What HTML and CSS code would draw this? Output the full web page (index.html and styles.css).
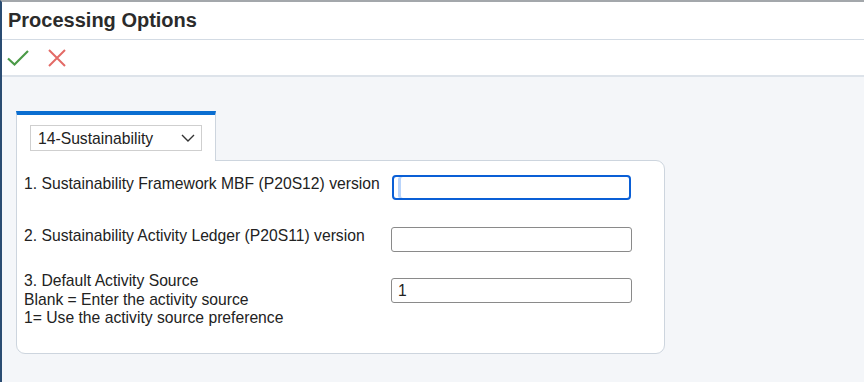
FILE: index.html
```html
<!DOCTYPE html>
<html lang="en">
<head>
    <meta charset="UTF-8">
    <title>Processing Options</title>
    <link rel="stylesheet" href="styles.css">
</head>
<body>
<div class="window">
    <div class="title-bar">
        <h1>Processing Options</h1>
    </div>
    <div class="toolbar">
        <button class="tool-btn" title="OK">
            <svg width="22" height="18" viewBox="0 0 22 18"><path d="M1 9.5 L7.5 15.5 L21 2" fill="none" stroke="#4b9a47" stroke-width="2.2"/></svg>
        </button>
        <button class="tool-btn" title="Cancel">
            <svg width="20" height="20" viewBox="0 0 20 20"><path d="M2 2 L18 18 M18 2 L2 18" fill="none" stroke="#e36a66" stroke-width="2"/></svg>
        </button>
    </div>
    <div class="content">
        <div class="tab">
            <select class="tab-select">
                <option>14-Sustainability</option>
            </select>
        </div>
        <div class="panel">
            <div class="row row-1">
                <label class="label" for="f1">1. Sustainability Framework MBF (P20S12) version</label>
                <input class="field field-focus" id="f1" type="text">
            </div>
            <div class="row row-2">
                <label class="label" for="f2">2. Sustainability Activity Ledger (P20S11) version</label>
                <input class="field" id="f2" type="text">
            </div>
            <div class="row row-3">
                <label class="label" for="f3">3. Default Activity Source<br>Blank = Enter the activity source<br>1= Use the activity source preference</label>
                <input class="field" id="f3" type="text" value="1">
            </div>
        </div>
    </div>
</div>
</body>
</html>
```

FILE: styles.css
```css
html, body {
    margin: 0;
    height: 100%;
}
body {
    font-family: "Liberation Sans", Arial, sans-serif;
    color: #222;
    background: #f4f6f9;
}
.window {
    height: 100%;
    border-top: 2px solid #a3a7ab;
    border-left: 2px solid #2a4c72;
    box-sizing: border-box;
}
.title-bar {
    background: #fff;
    height: 37px;
    padding-left: 6px;
    display: flex;
    align-items: center;
    border-bottom: 1px solid #d3dbe4;
}
.title-bar h1 {
    margin: 0;
    font-size: 20px;
    font-weight: bold;
    color: #2b2b2b;
}
.toolbar {
    background: #fff;
    height: 35px;
    display: flex;
    align-items: center;
    gap: 18px;
    padding-left: 5px;
    border-bottom: 2px solid #dde3ea;
}
.tool-btn {
    background: none;
    border: none;
    padding: 0;
    display: flex;
    cursor: pointer;
}
.content {
    padding: 34px 0 0 14px;
}
.tab {
    width: 200px;
    height: 50px;
    background: #fff;
    border-top: 4px solid #0a6ed1;
    border-left: 1px solid #cdd5de;
    border-right: 1px solid #cdd5de;
    padding: 10px 0 0 13px;
    box-sizing: border-box;
    margin-bottom: -1px;
    position: relative;
}
.tab-select {
    appearance: none;
    -webkit-appearance: none;
    width: 172px;
    height: 26px;
    font-family: inherit;
    font-size: 15.7px;
    color: #222;
    border: 1px solid #cfcfcf;
    border-radius: 0;
    padding: 0 0 0 7px;
    background: #fff url("data:image/svg+xml;utf8,<svg xmlns='http://www.w3.org/2000/svg' width='14' height='8' viewBox='0 0 14 8'><path d='M1 1 L7 7 L13 1' fill='none' stroke='%23333' stroke-width='1.4'/></svg>") no-repeat right 6px center;
}
.panel {
    width: 649px;
    background: #fff;
    border: 1px solid #cdd5de;
    border-radius: 0 9px 9px 9px;
    padding: 14px 0 23px 7px;
    box-sizing: border-box;
    height: 194px;
}
.row {
    display: flex;
    align-items: flex-start;
}
.row-2 { margin-top: 27px; }
.row-3 { margin-top: 20px; }
.label {
    width: 367px;
    font-size: 15.7px;
    line-height: 18.5px;
}
.field {
    width: 241px;
    height: 25px;
    box-sizing: border-box;
    border: 1px solid #8a8a8a;
    border-radius: 3px;
    padding: 0 6px;
    font-family: inherit;
    font-size: 15.7px;
    color: #222;
}
.field-focus {
    border: 2px solid #0a5fd6;
    border-radius: 4px;
    margin-left: 1px;
    width: 239px;
    box-shadow: inset 4px 0 0 0 #fff, inset 7px 0 0 0 #b9d4fb;
    outline: none;
}
.row-3 .field {
    margin-top: 6px;
}
```
